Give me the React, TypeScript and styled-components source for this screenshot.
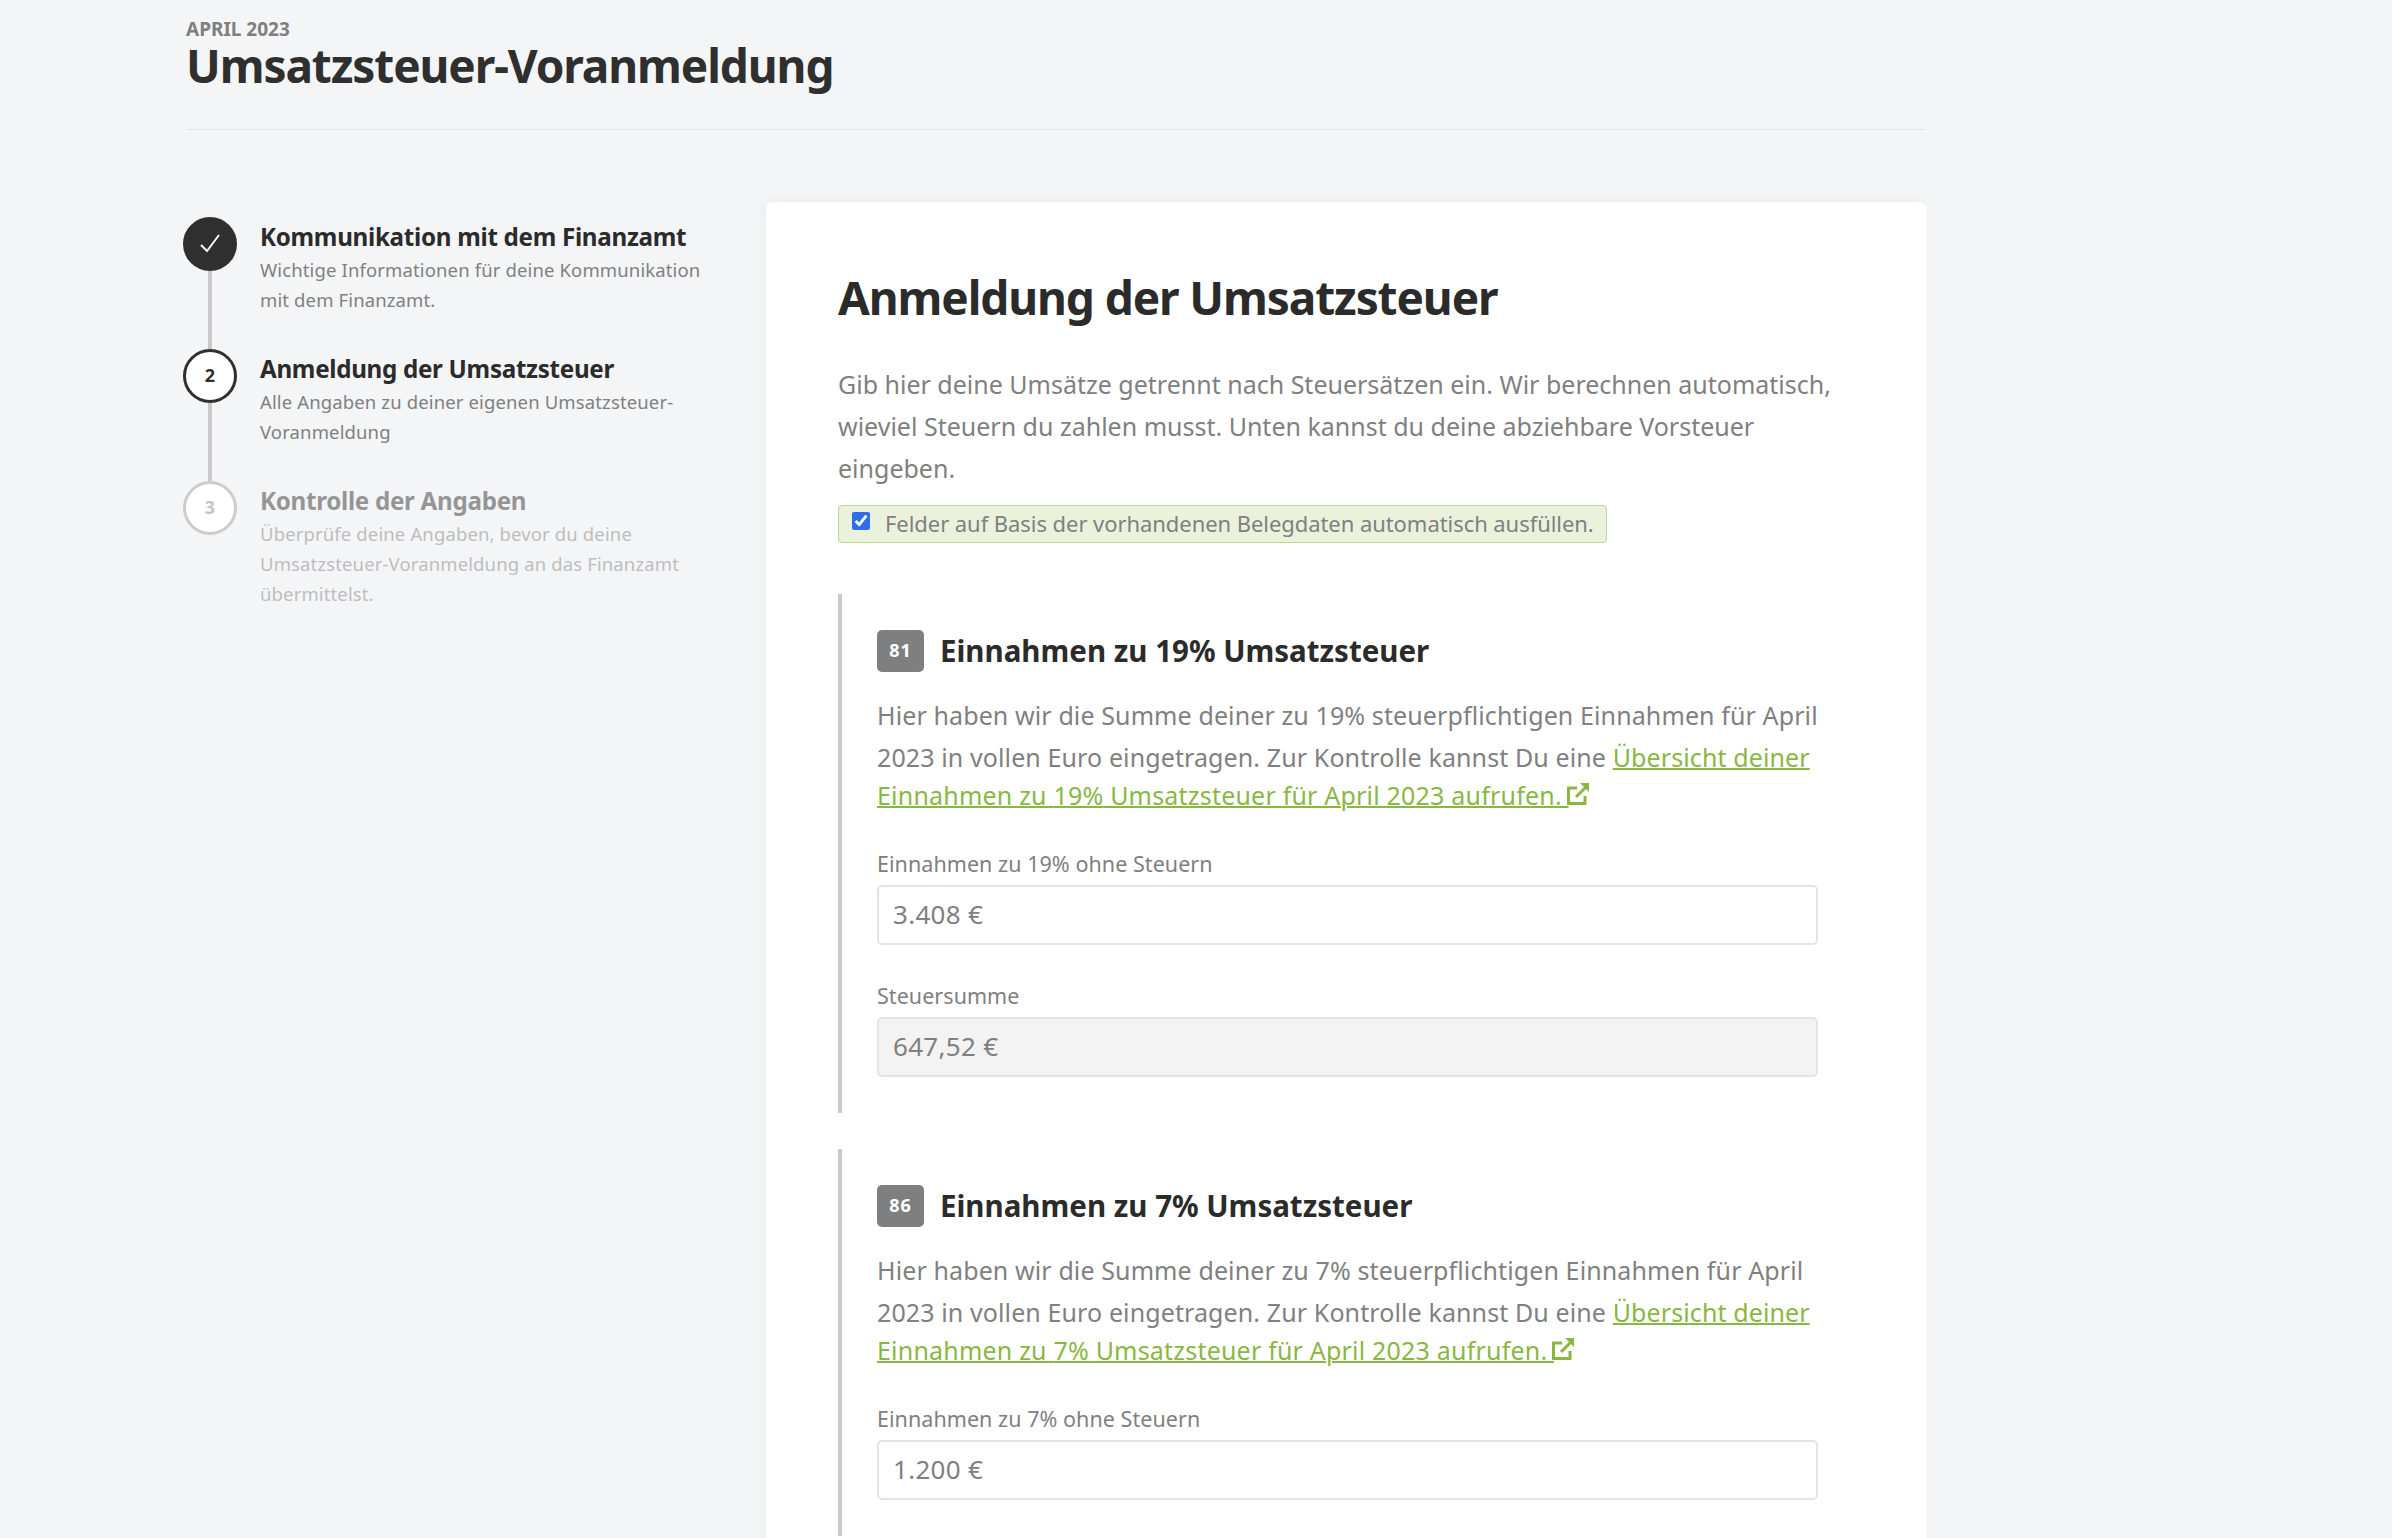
import React from "react";
import styled, { createGlobalStyle } from "styled-components";

const Global = createGlobalStyle`
  html, body { margin: 0; padding: 0; background: #f4f5f7; }
  body { font-family: "Noto Sans", sans-serif; color: #808080; overflow: hidden; height: 1538px; }
  * { box-sizing: border-box; }
`;

const Page = styled.div`
  padding-left: 186px;
  width: 1926px;
  height: 1538px;
  overflow: hidden;
`;
const Header = styled.header`
  width: 1740px;
  height: 130px;
  padding-top: 18px;
  border-bottom: 1px solid #e0e1e3;
`;
const Eyebrow = styled.div`
  font: 700 19px/22px "Noto Sans", sans-serif;
  color: #7f7f7f;
`;
const PageTitle = styled.h1`
  margin: 0;
  font: 700 46px/50px "Noto Sans", sans-serif;
  letter-spacing: -1.1px;
  color: #2f2f2f;
`;
const Columns = styled.div`
  display: flex;
  align-items: flex-start;
  margin-top: 72px;
`;
const Steps = styled.ol`
  list-style: none;
  margin: 15px 0 0 -3px;
  padding: 0;
  width: 583px;
  flex: none;
`;
const Step = styled.li`
  position: relative;
  display: flex;
  gap: 23px;
  height: 132px;
`;
const StepRail = styled.div`
  position: absolute;
  left: 25px;
  top: 54px;
  width: 4px;
  height: 78px;
  background: #c9c9c9;
`;
const Circle = styled.div<{ $variant: "done" | "active" | "todo" }>`
  width: 54px;
  height: 54px;
  flex: none;
  border-radius: 50%;
  display: flex;
  align-items: center;
  justify-content: center;
  padding-bottom: 3px;
  font: 700 18px "Noto Sans", sans-serif;
  border: 3px solid ${(p) => (p.$variant === "todo" ? "#cccccc" : "#2f2f2f")};
  background: ${(p) => (p.$variant === "done" ? "#2f2f2f" : "#fff")};
  color: ${(p) => (p.$variant === "todo" ? "#c4c4c4" : "#2f2f2f")};
`;
const StepBody = styled.div<{ $muted?: boolean }>`
  padding-top: 4px;
  opacity: ${(p) => (p.$muted ? 0.47 : 1)};
`;
const StepTitle = styled.div`
  font: 700 24.2px/32px "Noto Sans", sans-serif;
  letter-spacing: -0.3px;
  color: #2b2b2b;
`;
const StepText = styled.div`
  font-size: 18.5px;
  line-height: 30px;
  letter-spacing: 0.13px;
  margin-top: 2px;
  color: #808080;
`;
const Card = styled.main`
  width: 1160px;
  flex: none;
  background: #fff;
  border-radius: 6px;
  box-shadow: 0 0 14px rgba(0, 0, 0, 0.06);
  padding: 69px 72px;
`;
const CardTitle = styled.h2`
  margin: 0 0 40px;
  font: 700 46px/52px "Noto Sans", sans-serif;
  letter-spacing: -1.1px;
  color: #2b2b2b;
`;
const Lead = styled.p`
  margin: 0;
  font-size: 25px;
  line-height: 42px;
  white-space: nowrap;
`;
const AutoFill = styled.label`
  display: inline-flex;
  align-items: center;
  height: 38px;
  margin-top: 16px;
  padding: 0 12px 2px 13px;
  gap: 15px;
  background: #eaf2dc;
  border: 1px solid #bcd88f;
  border-radius: 4px;
  font-size: 22px;
  letter-spacing: -0.06px;
  color: #808080;
`;
const Check = styled.input`
  width: 18px;
  height: 18px;
  margin: 0 0 4px;
  accent-color: #2f6fed;
`;
const Section = styled.section`
  margin-top: 51px;
  border-left: 4px solid #c9c9c9;
  padding: 36px 0 36px 35px;
  & + & { margin-top: 36px; }
`;
const SectionHead = styled.div`
  display: flex;
  align-items: center;
  gap: 16px;
  height: 42px;
  margin-bottom: 22px;
`;
const Badge = styled.span`
  width: 47px;
  height: 42px;
  padding-bottom: 2px;
  border-radius: 5px;
  background: #7f7f7f;
  color: #fff;
  display: flex;
  align-items: center;
  justify-content: center;
  font: 700 18px "Noto Sans", sans-serif;
  letter-spacing: 1px;
`;
const SectionTitle = styled.h3`
  margin: 0;
  font: 700 29.5px/42px "Noto Sans", sans-serif;
  color: #2b2b2b;
`;
const Para = styled.p`
  margin: 0;
  font-size: 25px;
  line-height: 42px;
  letter-spacing: 0.11px;
  white-space: nowrap;
`;
const LinkLine = styled.p`
  margin: 0 0 34px;
  font-size: 25px;
  line-height: 34px;
  letter-spacing: 0.2px;
  white-space: nowrap;
`;
const Link = styled.a`
  color: #89b743;
  text-decoration: underline;
  text-decoration-thickness: 2px;
`;
const ExternalIcon = styled.svg`
  width: 24px;
  height: 24px;
  margin-left: -3px;
  color: #89b743;
  vertical-align: -1px;
`;
const Field = styled.div`
  width: 941px;
  & + & { margin-top: 33px; }
`;
const FieldLabel = styled.div`
  font-size: 21.5px;
  letter-spacing: 0.05px;
  line-height: 36px;
  margin-bottom: 3px;
`;
const Input = styled.div<{ $disabled?: boolean }>`
  height: 60px;
  display: flex;
  align-items: center;
  padding: 0 0 2px 14px;
  font-size: 26px;
  letter-spacing: 0.3px;
  border: 2px solid #e4e4e4;
  border-radius: 5px;
  background: ${(p) => (p.$disabled ? "#f3f3f3" : "#fff")};
`;

const External = () => (
  <ExternalIcon viewBox="0 0 24 24" fill="none" stroke="currentColor" strokeWidth="3">
    <path d="M19 14v7.500H2.500V6H11" />
    <path d="M10 15 20 5" />
    <path d="M14 1h9v9z" fill="currentColor" stroke="none" />
  </ExternalIcon>
);

const sections = [
  { code: "81", rate: "19%", fields: [["Einnahmen zu 19% ohne Steuern", "3.408 €", false], ["Steuersumme", "647,52 €", true]] },
  { code: "86", rate: "7%", fields: [["Einnahmen zu 7% ohne Steuern", "1.200 €", false]] },
] as const;

export default function App() {
  return (
    <Page>
      <Global />
      <Header>
        <Eyebrow>APRIL 2023</Eyebrow>
        <PageTitle>Umsatzsteuer-Voranmeldung</PageTitle>
      </Header>
      <Columns>
        <Steps>
          <Step>
            <StepRail />
            <Circle $variant="done">
              <svg width="22" height="22" viewBox="0 0 22 22" fill="none" stroke="#fff" strokeWidth="2"><path d="M2 13l6 6L20 3" /></svg>
            </Circle>
            <StepBody>
              <StepTitle>Kommunikation mit dem Finanzamt</StepTitle>
              <StepText>Wichtige Informationen für deine Kommunikation<br />mit dem Finanzamt.</StepText>
            </StepBody>
          </Step>
          <Step>
            <StepRail />
            <Circle $variant="active">2</Circle>
            <StepBody>
              <StepTitle>Anmeldung der Umsatzsteuer</StepTitle>
              <StepText>Alle Angaben zu deiner eigenen Umsatzsteuer-<br />Voranmeldung</StepText>
            </StepBody>
          </Step>
          <Step>
            <Circle $variant="todo">3</Circle>
            <StepBody $muted>
              <StepTitle>Kontrolle der Angaben</StepTitle>
              <StepText>Überprüfe deine Angaben, bevor du deine<br />Umsatzsteuer-Voranmeldung an das Finanzamt<br />übermittelst.</StepText>
            </StepBody>
          </Step>
        </Steps>
        <Card>
          <CardTitle>Anmeldung der Umsatzsteuer</CardTitle>
          <Lead>Gib hier deine Umsätze getrennt nach Steuersätzen ein. Wir berechnen automatisch,<br />wieviel Steuern du zahlen musst. Unten kannst du deine abziehbare Vorsteuer<br />eingeben.</Lead>
          <AutoFill><Check type="checkbox" defaultChecked />Felder auf Basis der vorhandenen Belegdaten automatisch ausfüllen.</AutoFill>
          {sections.map((s) => (
            <Section key={s.code}>
              <SectionHead><Badge>{s.code}</Badge><SectionTitle>Einnahmen zu {s.rate} Umsatzsteuer</SectionTitle></SectionHead>
              <Para>Hier haben wir die Summe deiner zu {s.rate} steuerpflichtigen Einnahmen für April<br />2023 in vollen Euro eingetragen. Zur Kontrolle kannst Du eine <Link href="#">Übersicht deiner</Link></Para>
              <LinkLine><Link href="#">Einnahmen zu {s.rate} Umsatzsteuer für April 2023 aufrufen. </Link><External /></LinkLine>
              {s.fields.map(([label, value, disabled]) => (
                <Field key={label}><FieldLabel>{label}</FieldLabel><Input $disabled={disabled}>{value}</Input></Field>
              ))}
            </Section>
          ))}
        </Card>
      </Columns>
    </Page>
  );
}
